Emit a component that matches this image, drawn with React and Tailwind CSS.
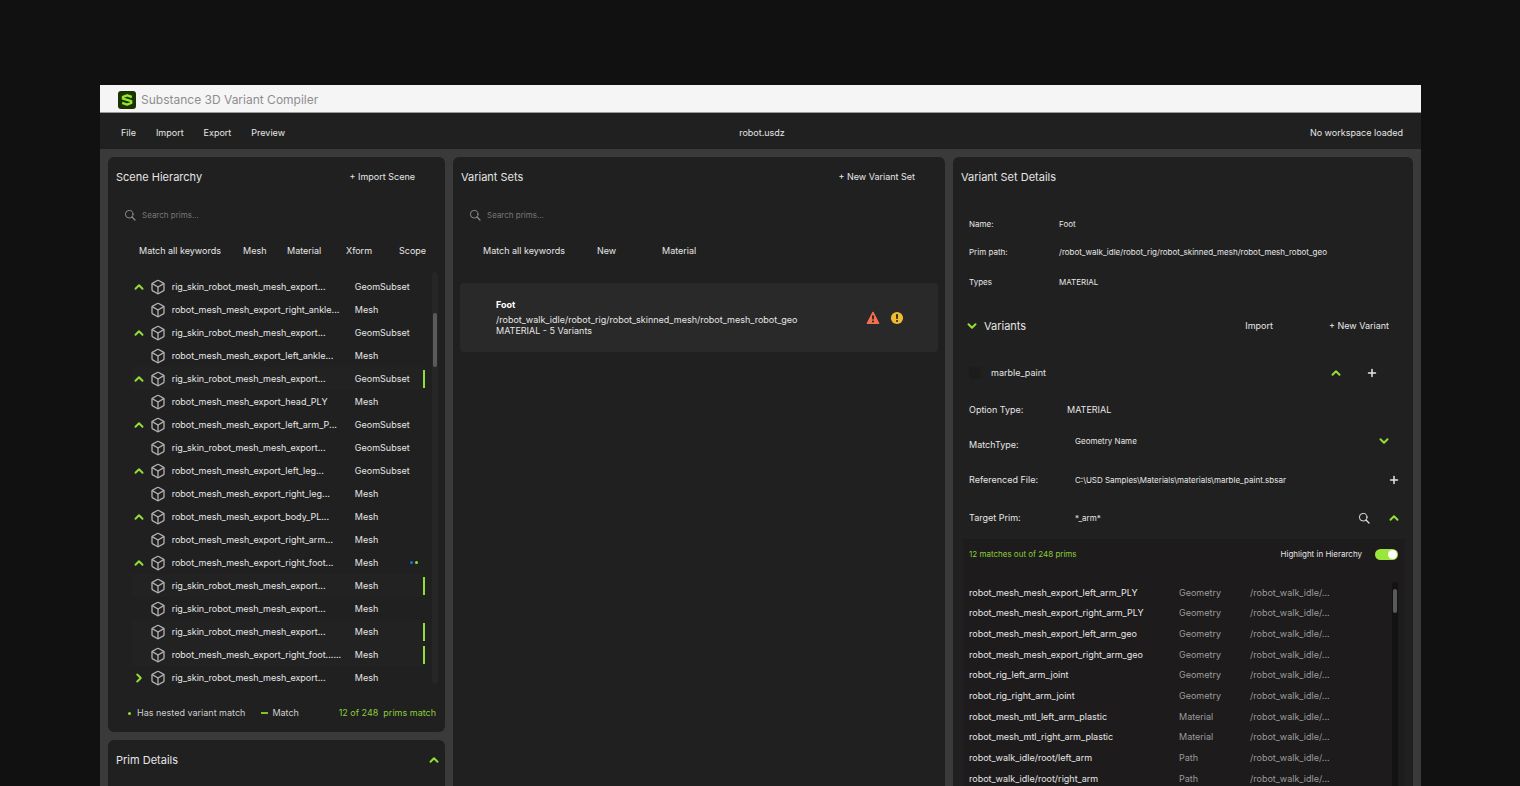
import { useState } from 'react';
import { Box, ChevronDown, ChevronRight, ChevronUp, Plus } from 'lucide-react';

const PRIMS = [
  { name: 'rig_skin_robot_mesh_mesh_export...', type: 'GeomSubset', open: true },
  { name: 'robot_mesh_mesh_export_right_ankle...', type: 'Mesh' },
  { name: 'rig_skin_robot_mesh_mesh_export...', type: 'GeomSubset', open: true },
  { name: 'robot_mesh_mesh_export_left_ankle...', type: 'Mesh' },
  { name: 'rig_skin_robot_mesh_mesh_export...', type: 'GeomSubset', open: true, match: true },
  { name: 'robot_mesh_mesh_export_head_PLY', type: 'Mesh' },
  { name: 'robot_mesh_mesh_export_left_arm_P...', type: 'GeomSubset', open: true },
  { name: 'rig_skin_robot_mesh_mesh_export...', type: 'GeomSubset' },
  { name: 'robot_mesh_mesh_export_left_leg...', type: 'GeomSubset', open: true },
  { name: 'robot_mesh_mesh_export_right_leg...', type: 'Mesh' },
  { name: 'robot_mesh_mesh_export_body_PL...', type: 'Mesh', open: true },
  { name: 'robot_mesh_mesh_export_right_arm...', type: 'Mesh' },
  { name: 'robot_mesh_mesh_export_right_foot...', type: 'Mesh', open: true, nested: true },
  { name: 'rig_skin_robot_mesh_mesh_export...', type: 'Mesh', match: true },
  { name: 'rig_skin_robot_mesh_mesh_export...', type: 'Mesh' },
  { name: 'rig_skin_robot_mesh_mesh_export...', type: 'Mesh', match: true },
  { name: 'robot_mesh_mesh_export_right_foot......', type: 'Mesh', match: true },
  { name: 'rig_skin_robot_mesh_mesh_export...', type: 'Mesh', open: false },
];

const MATCHES = [
  ['robot_mesh_mesh_export_left_arm_PLY', 'Geometry'],
  ['robot_mesh_mesh_export_right_arm_PLY', 'Geometry'],
  ['robot_mesh_mesh_export_left_arm_geo', 'Geometry'],
  ['robot_mesh_mesh_export_right_arm_geo', 'Geometry'],
  ['robot_rig_left_arm_joint', 'Geometry'],
  ['robot_rig_right_arm_joint', 'Geometry'],
  ['robot_mesh_mtl_left_arm_plastic', 'Material'],
  ['robot_mesh_mtl_right_arm_plastic', 'Material'],
  ['robot_walk_idle/root/left_arm', 'Path'],
  ['robot_walk_idle/root/right_arm', 'Path'],
];

const PRIM_PATH = '/robot_walk_idle/robot_rig/robot_skinned_mesh/robot_mesh_robot_geo';

const Logo = () => (
  <svg viewBox="0 0 18 18" className="size-[18px] shrink-0" aria-hidden="true">
    <rect width="18" height="18" rx="3" fill="#1c3301" />
    <path
      d="M13.8 6 9.2 4.3 5 5.9v1.8l8.2 2.4V12L9 13.6l-4.8-1.7"
      fill="none"
      stroke="#93e62f"
      strokeWidth="2.4"
      strokeLinejoin="round"
    />
  </svg>
);

const SearchIcon = () => (
  <svg viewBox="0 0 12 12" className="size-3 shrink-0" fill="none" stroke="currentColor" strokeLinecap="round" aria-hidden="true">
    <circle cx="5.2" cy="5.2" r="3.8" />
    <path d="m8 8 3 3" strokeWidth="1.2" />
  </svg>
);

const ErrorIcon = () => (
  <svg viewBox="0 0 14 14" className="size-[14px]" aria-hidden="true">
    <path d="M7 1.4 12.6 12.4H1.4z" fill="#f3704f" stroke="#f3704f" strokeWidth="1.4" strokeLinejoin="round" />
    <path d="M6 4.4h2l-.3 4.1H6.3z" fill="#1c1c1c" />
    <circle cx="7" cy="10.4" r="1" fill="#1c1c1c" />
  </svg>
);

const WarningIcon = () => (
  <svg viewBox="0 0 14 14" className="size-[14px]" aria-hidden="true">
    <circle cx="7" cy="7" r="6.1" fill="#efbb31" />
    <path d="M6 3.3h2l-.3 4.6H6.3z" fill="#1c1c1c" />
    <circle cx="7" cy="9.9" r="1" fill="#1c1c1c" />
  </svg>
);

const Chevron = ({ icon: Icon = ChevronUp }) => (
  <Icon size={14} strokeWidth={3.4} className="text-[#93dd35]" />
);

const PlusIcon = () => <Plus size={12} strokeWidth={3} />;

const PanelHeader = ({ title, action }) => (
  <div className="flex h-10 items-center justify-between pr-[30px] pl-2">
    <h2 className="text-[11px]">{title}</h2>
    {action && <button>{action}</button>}
  </div>
);

const SearchBox = ({ label }) => (
  <label className="flex h-9 items-center gap-[6px] pl-4 text-[#8a8a8a]">
    <SearchIcon />
    <input
      type="text"
      aria-label={label}
      placeholder="Search prims..."
      className="w-48 bg-transparent text-[8px] outline-none placeholder:text-[#777]"
    />
  </label>
);

const SceneHierarchy = () => (
  <section className="rounded-md bg-[#202020]">
    <PanelHeader title="Scene Hierarchy" action="+ Import Scene" />
    <SearchBox label="Search scene prims" />
    <div className="grid h-[35px] grid-cols-[104px_44px_59px_53px_auto] items-center justify-items-start pl-[31px]">
      <button>Match all keywords</button>
      <button>Mesh</button>
      <button>Material</button>
      <button>Xform</button>
      <button>Scope</button>
    </div>

    <div className="mt-1 flex pr-[7px]">
      <table className="mt-[3px] ml-6 flex-1 table-fixed">
        <colgroup>
          <col className="w-4" />
          <col className="w-5" />
          <col className="w-[184px]" />
          <col />
          <col className="w-4" />
        </colgroup>
        <tbody>
          {PRIMS.map((prim, i) => (
            <tr key={i} className={prim.match ? 'h-[23px] bg-[#222222]' : 'h-[23px]'}>
              <td>
                {'open' in prim && (
                  <button aria-label={prim.open ? 'Collapse' : 'Expand'} className="block">
                    <Chevron icon={prim.open ? ChevronUp : ChevronRight} />
                  </button>
                )}
              </td>
              <td>
                <Box size={16} strokeWidth={2} className="ml-[2px] text-[#b0b0b0]" />
              </td>
              <td className="pl-1 whitespace-nowrap">{prim.name}</td>
              <td className="pl-1">{prim.type}</td>
              <td>
                {prim.match && <div className="ml-auto h-[18px] w-[2px] bg-[#93dd35]" />}
                {prim.nested && (
                  <div className="flex gap-[2px]">
                    <span className="size-[3px] rounded-full bg-[#1473e6]" />
                    <span className="size-[3px] rounded-full bg-[#93dd35]" />
                  </div>
                )}
              </td>
            </tr>
          ))}
        </tbody>
      </table>
      <div className="ml-[7px] h-[412px] w-[6px] rounded-full bg-[#262626] px-px pt-[41px]">
        <div className="h-[54px] rounded-full bg-[#5a5a5a]" />
      </div>
    </div>

    <div className="mt-[13px] mb-2 flex h-[22px] items-center pr-[9px] pl-5 text-[#cfcfcf]">
      <span className="mr-[6px] size-[3px] rounded-full bg-[#93dd35]" />
      <span>Has nested variant match</span>
      <span className="mr-1 ml-4 h-[2px] w-[7px] bg-[#7fbf30]" />
      <span>Match</span>
      <span className="ml-auto whitespace-pre text-[#8ccc3a]">12 of 248  prims match</span>
    </div>
  </section>
);

const VariantSets = () => (
  <section className="rounded-t-md bg-[#202020]">
    <PanelHeader title="Variant Sets" action="+ New Variant Set" />
    <SearchBox label="Search variant sets" />
    <div className="grid h-[35px] grid-cols-[114px_65px_auto] items-center justify-items-start pl-[30px]">
      <button>Match all keywords</button>
      <button>New</button>
      <button>Material</button>
    </div>
    <article className="mx-[7px] mt-[15px] flex h-[69px] items-center rounded-[4px] bg-[#292929] pr-[34px] pl-9">
      <div className="flex-1 leading-[11px]">
        <h3 className="mb-1 font-bold text-white">Foot</h3>
        <p>{PRIM_PATH}</p>
        <p>MATERIAL - 5 Variants</p>
      </div>
      <div className="flex gap-[10px]">
        <ErrorIcon />
        <WarningIcon />
      </div>
    </article>
  </section>
);

const VariantSetDetails = () => {
  const [matchType, setMatchType] = useState('Geometry Name');
  const [highlight, setHighlight] = useState(true);

  return (
    <section className="rounded-t-md bg-[#202020]">
      <PanelHeader title="Variant Set Details" />

      <dl className="mt-3 grid grid-cols-[90px_1fr] grid-rows-[29px_28px_32px] items-center pl-4 text-[8px]">
        <dt>Name:</dt>
        <dd>Foot</dd>
        <dt>Prim path:</dt>
        <dd>{PRIM_PATH}</dd>
        <dt>Types</dt>
        <dd>MATERIAL</dd>
      </dl>

      <div className="mt-4 flex h-6 items-center pr-6 pl-3">
        <button aria-label="Collapse variants">
          <Chevron icon={ChevronDown} />
        </button>
        <h3 className="ml-[5px] flex-1 text-[11px]">Variants</h3>
        <button className="mr-14">Import</button>
        <button>+ New Variant</button>
      </div>

      <div className="mt-[23px] flex h-6 items-center pr-[35px] pl-4">
        <input id="marble" type="checkbox" className="size-3 appearance-none rounded-[2px] bg-[#1c1c1b]" />
        <label htmlFor="marble" className="ml-[10px] flex-1">marble_paint</label>
        <button aria-label="Collapse marble_paint" className="mr-[23px]">
          <Chevron />
        </button>
        <button aria-label="Add option">
          <PlusIcon />
        </button>
      </div>

      <div className="mt-[7px] grid grid-cols-[98px_1fr] grid-rows-[35px_35px_35px_42px] items-center pl-4">
        <span>Option Type:</span>
        <span>MATERIAL</span>

        <label htmlFor="match-type">MatchType:</label>
        <div className="flex items-center pb-2 pl-2">
          <select
            id="match-type"
            value={matchType}
            onChange={(e) => setMatchType(e.target.value)}
            className="flex-1 appearance-none bg-transparent text-[8px] outline-none"
          >
            <option>Geometry Name</option>
            <option>Material Name</option>
          </select>
          <span className="mr-[22px]">
            <Chevron icon={ChevronDown} />
          </span>
        </div>

        <label htmlFor="ref-file">Referenced File:</label>
        <div className="flex items-center pr-[13px] pl-2">
          <input
            id="ref-file"
            type="text"
            defaultValue="C:\USD Samples\Materials\materials\marble_paint.sbsar"
            className="flex-1 bg-transparent text-[8px] outline-none"
          />
          <button aria-label="Choose file">
            <PlusIcon />
          </button>
        </div>

        <label htmlFor="target-prim">Target Prim:</label>
        <div className="flex items-center pr-3 pl-2">
          <input
            id="target-prim"
            type="text"
            defaultValue="*_arm*"
            className="flex-1 bg-transparent text-[8px] outline-none"
          />
          <button aria-label="Search target prims" className="mr-[17px]">
            <SearchIcon />
          </button>
          <button aria-label="Collapse matches">
            <Chevron />
          </button>
        </div>
      </div>

      <div className="mr-2 ml-[10px] h-[260px] bg-[#1d1b1b] pr-[7px] pl-[6px]">
        <div className="flex h-[30px] items-center text-[8px]">
          <span className="flex-1 text-[#8ccc3a]">12 matches out of 248 prims</span>
          <label htmlFor="highlight" className="mr-[13px]">Highlight in Hierarchy</label>
          <input
            id="highlight"
            type="checkbox"
            role="switch"
            checked={highlight}
            onChange={(e) => setHighlight(e.target.checked)}
            className="h-[11px] w-[23px] appearance-none rounded-full bg-[#666] before:m-px before:block before:size-[9px] before:rounded-full before:bg-white checked:bg-[#9ae63c] checked:before:ml-[13px]"
          />
        </div>
        <div className="mt-[13px] flex">
          <table className="h-[207px] flex-1 table-fixed">
            <tbody>
              {MATCHES.map(([name, type]) => (
                <tr key={name}>
                  <td className="w-[210px]">{name}</td>
                  <td className="w-[71px] text-[#9c9c9c]">{type}</td>
                  <td className="text-[#9c9c9c]">/robot_walk_idle/...</td>
                </tr>
              ))}
            </tbody>
          </table>
          <div className="h-[260px] w-[6px] rounded-full bg-[#121212] px-px pt-[7px]">
            <div className="h-6 rounded-full bg-[#5a5a5a]" />
          </div>
        </div>
      </div>
    </section>
  );
};

const App = () => (
  <div className="flex h-screen flex-col overflow-hidden bg-[#111111] pt-[85px] pr-[99px] pl-[100px] font-['Inter',sans-serif] text-[9px] text-[#e6e6e6]">
    <header>
      <div className="flex h-7 items-center gap-[5px] border-b border-[#9a9a9a] bg-[#f5f5f5] pt-[3px] pl-[18px]">
        <Logo />
        <h1 className="text-[12px] text-[#8e8e8e]">Substance 3D Variant Compiler</h1>
      </div>
      <div className="grid h-9 grid-cols-3 items-center bg-[#202020] pt-[3px] pr-[18px] pl-[21px]">
        <nav className="flex gap-5">
          <button>File</button>
          <button>Import</button>
          <button>Export</button>
          <button>Preview</button>
        </nav>
        <span className="text-center">robot.usdz</span>
        <span className="text-right">No workspace loaded</span>
      </div>
    </header>

    <main className="grid min-h-0 flex-1 grid-cols-[337fr_492fr_460fr] gap-2 bg-[#3a3a3a] px-2 pt-2">
      <div className="flex min-w-0 flex-col gap-2">
        <SceneHierarchy />
        <section className="flex-1 rounded-t-md bg-[#202020]">
          <div className="flex h-10 items-center justify-between pr-1 pl-2">
            <h2 className="text-[11px]">Prim Details</h2>
            <button aria-label="Expand prim details">
              <Chevron />
            </button>
          </div>
        </section>
      </div>
      <VariantSets />
      <VariantSetDetails />
    </main>
  </div>
);

export default App;
